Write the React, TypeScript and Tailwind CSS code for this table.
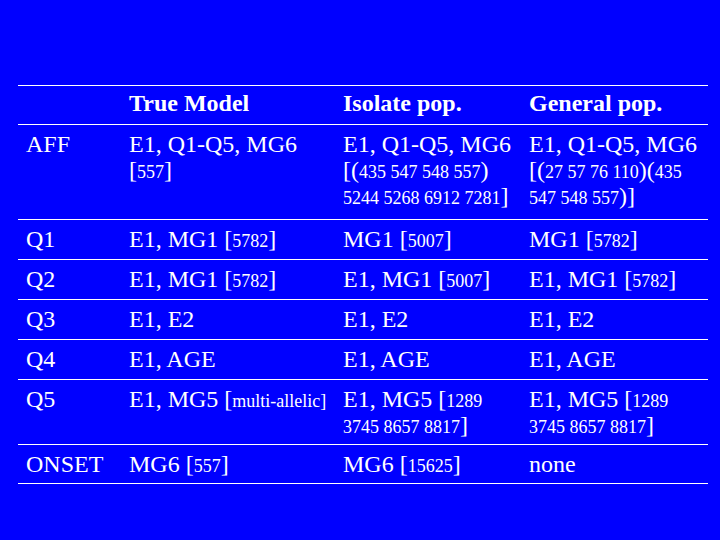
import type { ReactNode } from "react"

// small numbers inside brackets
const S = ({ children }: { children: ReactNode }) => (
  <span className="text-[18px] leading-none">{children}</span>
)

interface RowProps {
  cells: ReactNode[]
  className?: string
}

const Row = ({ cells, className = "pt-[6px] pb-[7px]" }: RowProps) => (
  <div className={`grid grid-cols-[103px_214px_186px_1fr] border-t border-white ${className}`}>
    {cells.map((c, i) => (
      <div key={i} className="pl-2 whitespace-nowrap">
        {c}
      </div>
    ))}
  </div>
)

export default function App() {
  return (
    <div
      className="w-[720px] h-[540px] bg-[#0000ff] text-white pt-[85px] text-[24px] leading-[26px]"
      style={{ fontFamily: '"Liberation Serif", "Times New Roman", serif' }}
    >
      <div className="ml-[18px] w-[690px]">
        <Row
          className="pt-[4px] pb-[8px] font-bold"
          cells={["", "True Model", "Isolate pop.", "General pop."]}
        />
        <Row
          className="pt-[6px] pb-[10px]"
          cells={[
            "AFF",
            <>
              E1, Q1-Q5, MG6
              <br />[<S>557</S>]
            </>,
            <>
              E1, Q1-Q5, MG6
              <br />[(<S>435 547 548 557</S>)
              <br />
              <S>5244 5268 6912 7281</S>]
            </>,
            <>
              E1, Q1-Q5, MG6
              <br />[(<S>27 57 76 110</S>)(<S>435</S>
              <br />
              <S>547 548 557</S>)]
            </>,
          ]}
        />
        <Row
          cells={[
            "Q1",
            <>E1, MG1 [<S>5782</S>]</>,
            <>MG1 [<S>5007</S>]</>,
            <>MG1 [<S>5782</S>]</>,
          ]}
        />
        <Row
          cells={[
            "Q2",
            <>E1, MG1 [<S>5782</S>]</>,
            <>E1, MG1 [<S>5007</S>]</>,
            <>E1, MG1 [<S>5782</S>]</>,
          ]}
        />
        <Row cells={["Q3", "E1, E2", "E1, E2", "E1, E2"]} />
        <Row cells={["Q4", "E1, AGE", "E1, AGE", "E1, AGE"]} />
        <Row
          className="pt-[6px] pb-[6px]"
          cells={[
            "Q5",
            <>E1, MG5 [<S>multi-allelic]</S></>,
            <>
              E1, MG5 [<S>1289</S>
              <br />
              <S>3745 8657 8817</S>]
            </>,
            <>
              E1, MG5 [<S>1289</S>
              <br />
              <S>3745 8657 8817</S>]
            </>,
          ]}
        />
        <Row
          className="pt-[6px] pb-[6px] border-b"
          cells={["ONSET", <>MG6 [<S>557</S>]</>, <>MG6 [<S>15625</S>]</>, "none"]}
        />
      </div>
    </div>
  )
}
